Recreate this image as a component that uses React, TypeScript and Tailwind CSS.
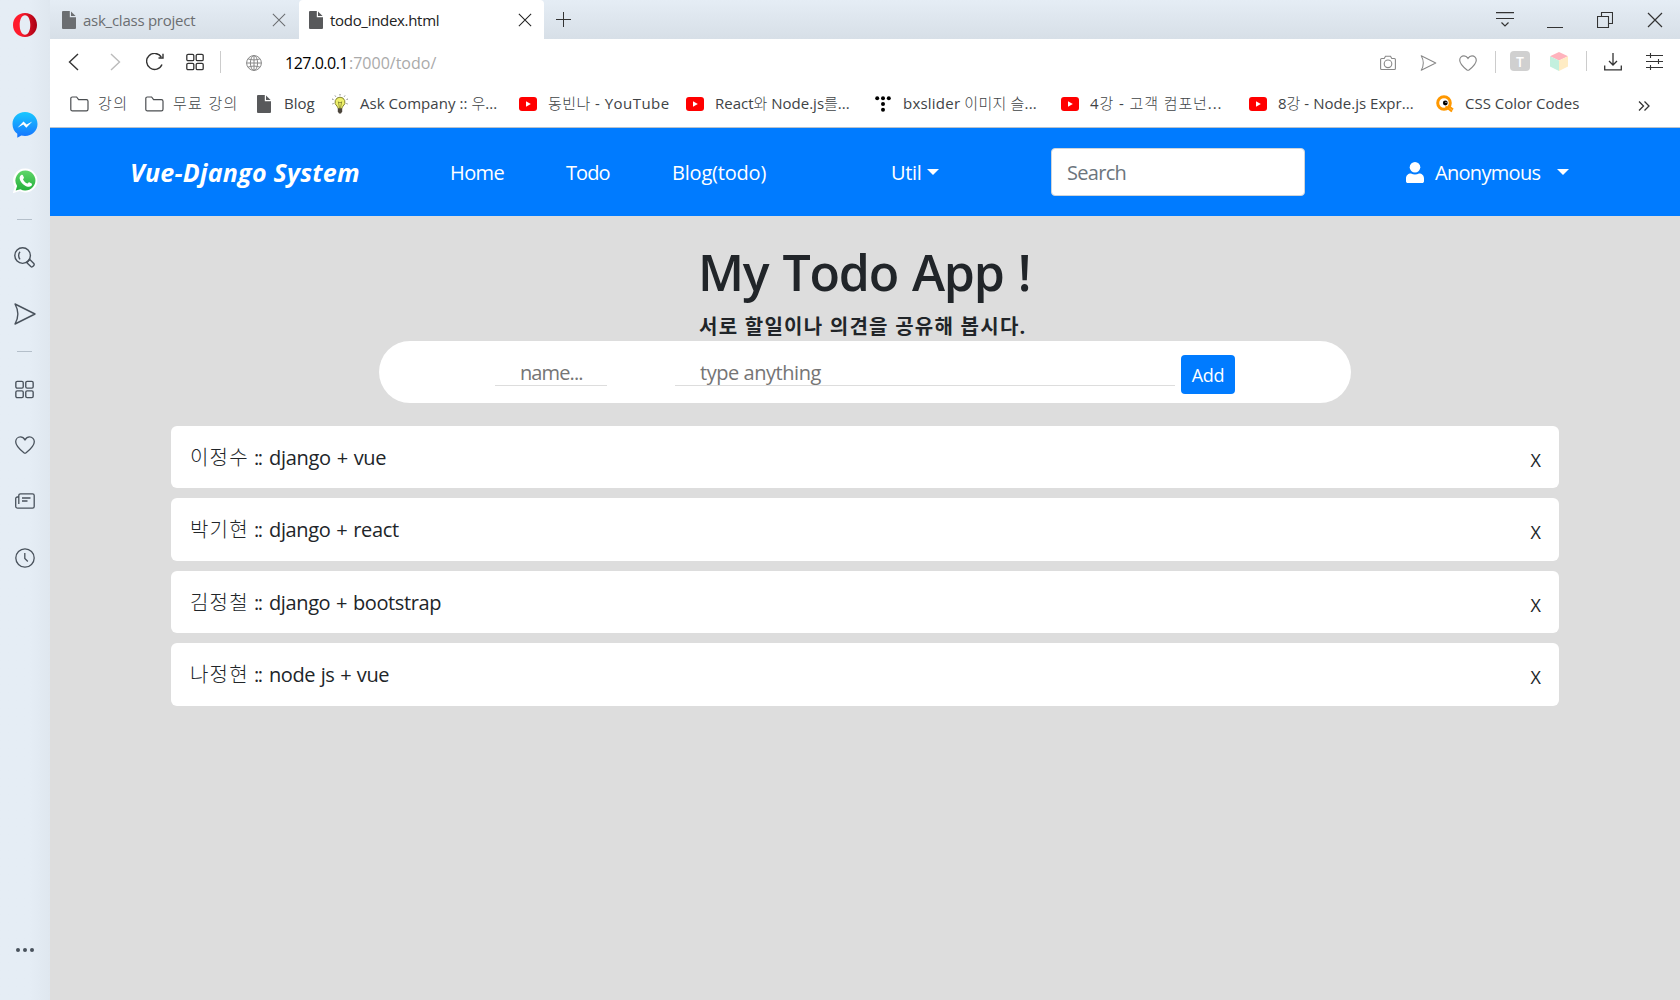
import type { ReactNode } from 'react';

const Folder = () => (
  <svg className="h-4 w-[19px] shrink-0" viewBox="0 0 19 16" fill="none" stroke="#4a4d50" strokeWidth="1.2"><path d="M.8 13.2V2.6C.8 1.6 1.4 1 2.4 1h4.2l2 2.6h7.8c1 0 1.6.6 1.6 1.6v8c0 1-.6 1.6-1.6 1.6h-14c-1 0-1.6-.6-1.6-1.6z" /></svg>
);
const Doc = ({ c = '#58595b' }: { c?: string }) => (
  <svg className="h-[18px] w-3.5 shrink-0" viewBox="0 0 14 18" fill={c}><path d="M1 0h6.8v6.2H14V17a1 1 0 0 1-1 1H1a1 1 0 0 1-1-1V1a1 1 0 0 1 1-1z" /><path d="M9 .4 13.6 5H9z" /></svg>
);
const Yt = () => (
  <svg className="h-3.5 w-[18px] shrink-0" viewBox="0 0 18 14"><rect width="18" height="14" rx="3" fill="#f00" /><path d="M7 4.2v5.6L11.8 7z" fill="#fff" /></svg>
);
const Bulb = () => (
  <svg className="h-5 w-4 shrink-0" viewBox="0 0 16 20"><path d="M8 3.2a5 5 0 0 0-3 9c.6.6.9 1.400 1 2.300h4c.1-.9.4-1.700 1-2.300a5 5 0 0 0-3-9z" fill="#eef06a" stroke="#77772a" strokeWidth=".9" /><path d="M6.300 7.500 7.500 14M9.700 7.500 8.500 14M6.300 8.500h3.400" stroke="#77772a" strokeWidth=".7" fill="none" /><path d="M5.800 14.500h4.400v3L9 19.600H7l-1.200-2.100z" fill="#4a443c" /><path d="M8 0v1.500M3 1.500l.8 1.200M13 1.500l-.8 1.200M0 5l1.500.5M16 5l-1.500.5M.3 10l1.400-.5M15.700 10l-1.400-.5" stroke="#777" strokeWidth=".9" /></svg>
);
const Tistory = () => (
  <svg className="h-4 w-4 shrink-0" viewBox="0 0 16 16"><circle cx="2.200" cy="2.200" r="2" /><circle cx="8" cy="2.200" r="2" /><circle cx="13.800" cy="2.200" r="2" /><circle cx="8" cy="8" r="2" /><circle cx="8" cy="13.800" r="2" /></svg>
);
const Quack = () => (
  <svg className="h-[18px] w-[18px] shrink-0" viewBox="0 0 18 18"><circle cx="8" cy="8" r="6.300" fill="#fff" stroke="#ff9800" strokeWidth="3" /><path d="m9.500 11.500 6.500 5M12 10.500l5 4" stroke="#ff9800" strokeWidth="2.200" /><circle cx="9.300" cy="8" r="2.400" /><circle cx="10" cy="7.300" r=".6" fill="#fff" /></svg>
);
const Grid = ({ s }: { s: string }) => (
  <svg className={s} viewBox="0 0 18 18" fill="none" stroke="currentColor" strokeWidth="1.300"><rect x=".8" y="1.300" width="7" height="6.400" rx="1.300" /><rect x="10.200" y="1.300" width="7" height="6.400" rx="1.300" /><rect x=".8" y="10.300" width="7" height="6.400" rx="1.300" /><rect x="10.200" y="10.300" width="7" height="6.400" rx="1.300" /></svg>
);
const Heart = ({ s }: { s: string }) => (
  <svg className={s} viewBox="0 0 20 18" fill="none" stroke="currentColor" strokeWidth="1.300"><path d="M10 3.800C8.800 1.800 7.300.9 5.500.9 2.700.9.700 3.100.7 5.800c0 4.200 3.800 7.500 8.200 11 .7.500 1.500.5 2.200 0 4.400-3.500 8.200-6.800 8.200-11 0-2.700-2-4.900-4.800-4.900-1.800 0-3.300.9-4.500 2.900z" /></svg>
);
const Send = ({ s }: { s: string }) => (
  <svg className={s} viewBox="0 0 22 22" fill="none" stroke="currentColor" strokeWidth="1.400" strokeLinejoin="round"><path d="M1 1 21 11 1 21c4-7 4-13 0-20z" /></svg>
);
const Close = ({ s }: { s: string }) => (
  <svg className={s} viewBox="0 0 16 16" fill="none" stroke="currentColor" strokeWidth="1.200"><path d="m1 1 14 14M15 1 1 15" /></svg>
);
const Caret = () => <span className="h-0 w-0 shrink-0 border-x-[6px] border-t-[6px] border-x-transparent border-t-white" />;

function Mark({ icon, w, iw, children, s = '' }: { icon: ReactNode; w: string; iw: string; children: ReactNode; s?: string }) {
  return (
    <div className={`flex shrink-0 items-center ${w}`}>
      <span className={`flex shrink-0 ${iw}`}>{icon}</span>
      <span className={`whitespace-nowrap ${s}`}>{children}</span>
    </div>
  );
}

const todos = [
  { who: '이정수', what: 'django + vue', h: 'h-[62px]', s: 'tracking-[-0.3px] [word-spacing:1px]' },
  { who: '박기현', what: 'django + react', h: 'h-[63px]', s: 'tracking-[-0.35px] [word-spacing:1px]' },
  { who: '김정철', what: 'django + bootstrap', h: 'h-[62px]', s: 'tracking-[-0.38px] [word-spacing:1px]' },
  { who: '나정현', what: 'node js + vue', h: 'h-[63px]', s: 'tracking-[-0.45px] [word-spacing:1px]' },
];

function Sidebar() {
  return (
    <aside className="flex h-full w-[50px] shrink-0 flex-col items-center bg-linear-to-r from-[#e5edf5] from-60% to-[#dfe7ef] pr-px text-[#49525c]">
      <svg className="mt-[13px] h-6 w-6 shrink-0" viewBox="0 0 24 24">
        <defs><linearGradient id="op" x1="0" x2="1"><stop offset=".3" stopColor="#ff1b2d" /><stop offset="1" stopColor="#a70014" /></linearGradient></defs>
        <path fillRule="evenodd" fill="url(#op)" d="M12 0C5 0 0 5.200 0 12s5 12 12 12 12-5.200 12-12S19 0 12 0zm0 2.200c3.200 0 5.300 4.200 5.300 9.800s-2.100 9.800-5.300 9.800S6.700 17.600 6.700 12 8.800 2.200 12 2.200z" />
      </svg>
      <svg className="mt-[75px] h-[26px] w-[26px] shrink-0" viewBox="0 0 26 26">
        <defs><linearGradient id="ms" x2="0" y2="1"><stop stopColor="#19c8ff" /><stop offset="1" stopColor="#1673ff" /></linearGradient></defs>
        <path fill="url(#ms)" d="M13 0c7.200 0 12.500 5.200 12.500 12S20 24 13 24c-1.300 0-2.500-.2-3.700-.5L5.300 25.800v-4C2.300 19.600.5 16.200.5 12 .5 5.200 5.800 0 13 0z" />
        <path fill="#fff" d="m5.500 15.800 6-6.300 3.100 3.100 5.700-3.100-6 6.300-3-3.200z" />
      </svg>
      <svg className="mt-[30px] h-[26px] w-[26px] shrink-0" viewBox="0 0 26 26">
        <defs><linearGradient id="wa" x2="0" y2="1"><stop stopColor="#60d669" /><stop offset="1" stopColor="#25b03c" /></linearGradient></defs>
        <path fill="#fff" d="M13.500.5a12 12 0 1 1-5.800 22.600L.8 25.200l2-6.600A12 12 0 0 1 13.500.5z" />
        <path fill="url(#wa)" d="M13.500 2.500a10 10 0 1 1-5 18.700l-4.800 1.300L5.100 18A10 10 0 0 1 13.500 2.500z" />
        <path fill="#fff" d="M9.300 7c.6-.5 1.300-.4 1.600.2l1 2.300c.2.500-.3 1.100-.9 1.900 1 2 2.400 3.300 4.500 4.200.8-.9 1.200-1.600 1.700-1.400l2.400 1.200c.7.300.4 1.800-.5 2.600-1.700 1.400-4.200.7-6.600-.8-2.200-1.400-4.800-4.200-4.900-7C7.600 8.800 8.300 7.700 9.300 7z" />
      </svg>
      <span className="mt-[25px] h-px w-[15px] shrink-0 bg-[#b4bfca]" />
      <svg className="mt-[27px] h-[21px] w-[21px] shrink-0" viewBox="0 0 21 21" fill="none" stroke="currentColor" strokeWidth="1.400"><circle cx="8.600" cy="8.600" r="7.800" /><path d="M6 4.800c-1.800 2-1.800 5.600 0 7.600M14.200 14.200l1.600-1.700 4 4c1.300 1.500-1.500 4.300-3 3l-4.200-4 1.600-1.600z" /></svg>
      <Send s="mt-[35px] h-[22px] w-[22px] shrink-0" />
      <span className="mt-[26px] h-px w-[15px] shrink-0 bg-[#b4bfca]" />
      <Grid s="mt-7 h-[19px] w-[19px] shrink-0" />
      <Heart s="mt-[37px] h-[18px] w-5 shrink-0" />
      <svg className="mt-[39px] h-4 w-5 shrink-0" viewBox="0 0 20 16" fill="none" stroke="currentColor" strokeWidth="1.300"><path d="M3.800 11V2.500c0-1 .7-1.700 1.700-1.700h12c1 0 1.700.7 1.700 1.700v11c0 1-.7 1.700-1.700 1.700H2.700c-1.200 0-2-.8-2-2V5.700c0-1 .8-1.700 1.700-1.700h1.400M7 5h8.500M7 8h5.500" /></svg>
      <svg className="mt-[39px] h-5 w-5 shrink-0" viewBox="0 0 20 20" fill="none" stroke="currentColor" strokeWidth="1.300"><circle cx="10" cy="10" r="9.200" /><path d="M9.800 5v5.500l3 3" /></svg>
      <svg className="mt-[380px] h-1 w-[18px] shrink-0" viewBox="0 0 18 4" fill="currentColor"><circle cx="2" cy="2" r="2" /><circle cx="9" cy="2" r="2" /><circle cx="16" cy="2" r="2" /></svg>
    </aside>
  );
}

export default function App() {
  return (
    <div className="flex h-[1000px] w-[1680px] overflow-hidden bg-[#ddd] font-['Open_Sans','Noto_Sans_CJK_KR_Light','Noto_Sans_CJK_KR',sans-serif]">
      <Sidebar />
      <div className="flex min-w-0 flex-1 flex-col">
        <div className="flex h-[39px] shrink-0 bg-linear-to-b from-[#e5edf5] to-[#d7dfe7] text-[15px] text-[#6b6e71]">
          <div className="flex w-[249px] items-center pl-3">
            <Doc c="#6b6e71" />
            <span className="ml-[7px] w-[189px] whitespace-nowrap pt-0.5 tracking-[-0.25px]">ask_class project</span>
            <Close s="h-3.5 w-3.5" />
          </div>
          <div className="flex w-[245px] items-center rounded-t bg-white pl-2.5 text-[#222]">
            <Doc />
            <span className="ml-[7px] w-[188px] whitespace-nowrap pt-0.5 tracking-[-0.3px]">todo_index.html</span>
            <Close s="h-3.5 w-3.5" />
          </div>
          <svg className="ml-3 mt-3 h-[15px] w-[15px] text-[#333]" viewBox="0 0 15 15" stroke="currentColor" strokeWidth="1"><path d="M7.500 0v15M0 7.500h15" /></svg>
          <div className="ml-auto mr-[17px] flex items-center text-[#333]">
            <svg className="h-4 w-[18px]" viewBox="0 0 18 16" fill="none" stroke="currentColor" strokeWidth="1.200"><path d="M0 .6h18M0 6.500h18M5.500 10.500 9 14l3.500-3.500" /></svg>
            <svg className="ml-[33px] h-4 w-4" viewBox="0 0 16 16" stroke="currentColor" strokeWidth="1"><path d="M0 15.500h16" /></svg>
            <svg className="ml-[34px] h-4 w-4" viewBox="0 0 16 16" fill="none" stroke="currentColor" strokeWidth="1.100"><path d="M.5 4.500h11v11H.5zM4.500 4V.5h11v11H12" /></svg>
            <Close s="ml-[34px] h-4 w-4" />
          </div>
        </div>
        <div className="flex h-[46px] shrink-0 items-center bg-white text-[16px] text-[#333]">
          <svg className="ml-[18px] h-[18px] w-[11px]" viewBox="0 0 11 18" fill="none" stroke="currentColor" strokeWidth="1.400"><path d="M10 1 1.500 9l8.500 8" /></svg>
          <svg className="ml-[31px] h-[18px] w-[11px] text-[#bbb]" viewBox="0 0 11 18" fill="none" stroke="currentColor" strokeWidth="1.400"><path d="m1 1 8.500 8L1 17" /></svg>
          <svg className="ml-[25px] h-[18px] w-[18px]" viewBox="0 0 18 18" fill="none" stroke="currentColor" strokeWidth="1.400"><path d="M16 11.500A8 8 0 1 1 15.300 4M17 .8V5h-4.500" /></svg>
          <Grid s="ml-[22px] h-[18px] w-[18px]" />
          <span className="ml-4 h-[22px] w-px bg-[#ccc]" />
          <svg className="ml-[25px] mt-0.5 h-4 w-4 text-[#888]" viewBox="0 0 16 16" fill="none" stroke="currentColor" strokeWidth="1"><circle cx="8" cy="8" r="7.400" /><ellipse cx="8" cy="8" rx="3.600" ry="7.400" /><path d="M.6 8h14.800M8 .6v14.800M2 3.800c3.500 1.500 8.500 1.500 12 0M2 12.200c3.500-1.500 8.500-1.500 12 0" /></svg>
          <span className="ml-[23px] w-16 whitespace-nowrap pt-0.5 tracking-[-0.5px] text-black">127.0.0.1</span>
          <span className="whitespace-nowrap pt-0.5 text-[#aaa]">:7000/todo/</span>
          <div className="ml-auto mr-[17px] flex items-center">
            <svg className="mt-0.5 h-4 w-4 text-[#888]" viewBox="0 0 16 16" fill="none" stroke="currentColor" strokeWidth="1.100"><path d="M1.600 3.500h2.600L5.500 1.300h5l1.300 2.200h2.600c.6 0 1 .4 1 1V13.500c0 .6-.4 1-1 1H1.600c-.6 0-1-.4-1-1v-9c0-.6.4-1 1-1z" /><circle cx="8" cy="8.800" r="3.800" /></svg>
            <Send s="mt-0.5 ml-6 h-4 w-[17px] text-[#888]" />
            <Heart s="mt-0.5 ml-[22px] h-4 w-[18px] text-[#888]" />
            <span className="ml-[18px] h-[22px] w-px bg-[#ccc]" />
            <span className="-mt-0.5 ml-3.5 flex h-5 w-5 items-center justify-center rounded-sm bg-[#d0d0d0] text-[14px] font-semibold text-white">T</span>
            <svg className="-mt-0.5 ml-5 h-[19px] w-[18px]" viewBox="0 0 18 19"><path d="m9 0 9 4.200L9 8.500 0 4.200z" fill="#ffb3bd" /><path d="m0 4.200 9 4.300V19l-9-4.500z" fill="#c3f0de" /><path d="m18 4.200-9 4.300V19l9-4.500z" fill="#ffecc4" /></svg>
            <span className="-mt-0.5 ml-[18px] h-5 w-px bg-[#ccc]" />
            <svg className="ml-[17px] h-[18px] w-[18px]" viewBox="0 0 18 18" fill="none" stroke="currentColor" strokeWidth="1.300"><path d="M9 0v12M5 8l4 4 4-4M.7 12.500v4.300h16.600v-4.300" /></svg>
            <svg className="ml-6 h-[18px] w-[17px]" viewBox="0 0 17 18" stroke="currentColor" strokeWidth="1.100"><path d="M0 2.500h17M0 8.500h17M0 14.500h17M4.500 0v5M12.500 6v5M4.500 12v5" /></svg>
          </div>
        </div>
        <div className="flex h-[43px] shrink-0 items-center border-b border-[#b9c2cc] bg-white pb-[5px] pl-5 text-[15px] text-[#404346]">
          <Mark icon={<Folder />} w="w-[75px]" iw="w-[28px]" s="tracking-[1.5px]">강의</Mark>
          <Mark icon={<Folder />} w="w-[112px]" iw="w-[28px]" s="tracking-[1.3px]">무료 강의</Mark>
          <Mark icon={<Doc />} w="w-[75px]" iw="w-[27px]">Blog</Mark>
          <Mark icon={<Bulb />} w="w-[187px]" iw="w-[28px]" s="tracking-[0.05px]">Ask Company :: 우...</Mark>
          <Mark icon={<Yt />} w="w-[167px]" iw="w-[29px]" s="tracking-[0.45px]">동빈나 - YouTube</Mark>
          <Mark icon={<Yt />} w="w-[189px]" iw="w-[29px]">React와 Node.js를...</Mark>
          <Mark icon={<Tistory />} w="w-[186px]" iw="w-[28px]" s="tracking-[0.22px]">bxslider 이미지 슬...</Mark>
          <Mark icon={<Yt />} w="w-[188px]" iw="w-[29px]" s="tracking-[0.9px]">4강 - 고객 컴포넌...</Mark>
          <Mark icon={<Yt />} w="w-[187px]" iw="w-[29px]" s="tracking-[0.03px]">8강 - Node.js Expr...</Mark>
          <Mark icon={<Quack />} w="w-[202px]" iw="w-[29px]">CSS Color Codes</Mark>
          <svg className="mt-1 h-2.5 w-3" viewBox="0 0 12 10" fill="none" stroke="#333" strokeWidth="1.300"><path d="m1 .5 4.500 4.500L1 9.500M6.500.5 11 5 6.500 9.500" /></svg>
        </div>
        <nav className="flex h-[88px] shrink-0 items-center bg-[#007bff] pl-20 text-[20px] text-white">
          <span className="w-[320px] whitespace-nowrap pt-0.5 text-[25px] font-bold italic tracking-[0.25px]">Vue-Django System</span>
          <span className="w-[116px] pt-0.5 tracking-[-0.6px]">Home</span>
          <span className="w-[106px] pt-0.5 tracking-[-0.9px]">Todo</span>
          <span className="w-[219px] pt-0.5 tracking-[-0.2px]">Blog(todo)</span>
          <span className="w-9 pt-0.5 tracking-[-0.3px]">Util</span>
          <Caret />
          <div className="ml-[112px] flex h-12 w-[254px] items-center rounded border border-[#ced4da] bg-white pt-0.5 pl-[15px] tracking-[-0.7px] text-[#6c757d]">Search</div>
          <svg className="ml-[101px] h-[21px] w-[18px]" viewBox="0 0 18 21" fill="#fff"><circle cx="9" cy="5.300" r="5.300" /><path d="M5 11.500c2.500 1.400 5.500 1.400 8 0 3 0 5 2 5 5v2.700c0 1-.8 1.800-1.800 1.800H1.800C.8 21 0 20.200 0 19.200v-2.700c0-3 2-5 5-5z" /></svg>
          <span className="ml-[11px] w-[122px] pt-0.5 tracking-[-0.7px]">Anonymous</span>
          <Caret />
        </nav>
        <main className="flex flex-1 flex-col text-[20px] text-[#212529]">
          <div className="mt-[26px] ml-[648px] h-[60px] whitespace-nowrap text-[50px] leading-[60px] font-semibold tracking-[-1.2px] [word-spacing:2.2px]">My Todo App !</div>
          <div className="mt-2.5 ml-[649px] h-[29px] whitespace-nowrap font-['Open_Sans','Noto_Sans_CJK_KR',sans-serif] text-[20px] leading-[29px] font-bold tracking-[1.25px]">서로 할일이나 의견을 공유해 봅시다.</div>
          <div className="ml-[329px] flex h-[62px] w-[972px] rounded-[31px] bg-white pl-[116px] text-[#757575]">
            <div className="mt-4 h-[29px] w-[112px] border-b border-[#ddd] pl-[25px] leading-[32px] tracking-[-0.9px]">name...</div>
            <div className="mt-4 ml-[68px] h-[29px] w-[500px] border-b border-[#ddd] pl-[25px] leading-[32px] tracking-[-0.45px]">type anything</div>
            <div className="mt-3.5 ml-1.5 flex h-[39px] w-[54px] items-center justify-center rounded bg-[#007bff] pt-0.5 text-[18px] tracking-[-0.3px] text-white">Add</div>
          </div>
          <ul className="mt-[23px] ml-[121px] flex w-[1388px] flex-col gap-2.5">
            {todos.map((t) => (
              <li key={t.who} className={`flex items-center justify-between rounded-md bg-white pr-[18px] pl-[19px] ${t.h}`}>
                <span className="mt-[17px] flex self-start whitespace-nowrap">
                  <span className="w-16 tracking-[1.2px]">{t.who}</span>
                  <span className="w-[15px] tracking-[-1.5px]">::</span>
                  <span className={t.s}>{t.what}</span>
                </span>
                <span className="mt-1.5 text-[18px]">X</span>
              </li>
            ))}
          </ul>
        </main>
      </div>
    </div>
  );
}
